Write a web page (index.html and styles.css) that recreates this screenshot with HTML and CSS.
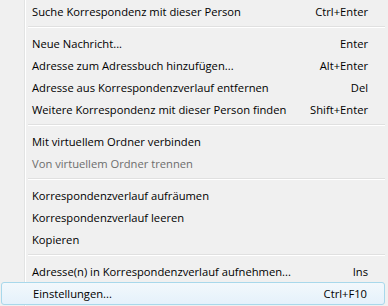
FILE: index.html
```html
<!DOCTYPE html>
<html>
<head>
<meta charset="utf-8">
<link rel="stylesheet" href="styles.css">
</head>
<body>
<div class="menu">
  <div class="item"><span class="label">Suche Korrespondenz mit dieser Person</span><span class="key">Ctrl+Enter</span></div>
  <div class="sep"></div>
  <div class="item"><span class="label">Neue Nachricht...</span><span class="key">Enter</span></div>
  <div class="item"><span class="label">Adresse zum Adressbuch hinzufügen...</span><span class="key">Alt+Enter</span></div>
  <div class="item"><span class="label">Adresse aus Korrespondenzverlauf entfernen</span><span class="key">Del</span></div>
  <div class="item"><span class="label">Weitere Korrespondenz mit dieser Person finden</span><span class="key">Shift+Enter</span></div>
  <div class="sep"></div>
  <div class="item"><span class="label">Mit virtuellem Ordner verbinden</span><span class="key"></span></div>
  <div class="item disabled"><span class="label">Von virtuellem Ordner trennen</span><span class="key"></span></div>
  <div class="sep"></div>
  <div class="item"><span class="label">Korrespondenzverlauf aufräumen</span><span class="key"></span></div>
  <div class="item"><span class="label">Korrespondenzverlauf leeren</span><span class="key"></span></div>
  <div class="item"><span class="label">Kopieren</span><span class="key"></span></div>
  <div class="sep"></div>
  <div class="item"><span class="label">Adresse(n) in Korrespondenzverlauf aufnehmen...</span><span class="key">Ins</span></div>
  <div class="item selected"><span class="label">Einstellungen...</span><span class="key">Ctrl+F10</span></div>
</div>
</body>
</html>
```

FILE: styles.css
```css
html, body {
  margin: 0;
  padding: 0;
  background: #f0f0f0;
}

.menu {
  width: 388px;
  height: 306px;
  background: linear-gradient(to right, #f0f0f0 0, #f0f0f0 24px, #e2e3e3 24px, #e2e3e3 25px, #ffffff 25px, #ffffff 26px, #f0f0f0 26px);
  font-family: "Open Sans", sans-serif;
  font-size: 11.2px;
  color: #000;
}

.item {
  height: 22px;
  display: flex;
  align-items: center;
  padding: 0 20px 0 32px;
  box-sizing: border-box;
}

.label {
  flex: 1;
  white-space: nowrap;
}

.key {
  white-space: nowrap;
}

.disabled {
  color: #6d6d6d;
}

.selected {
  margin: 0 3px 0 1px;
  padding: 0 17px 0 31px;
  height: 23px;
  border: 1px solid #a8d8eb;
  border-radius: 3px;
  background: linear-gradient(to bottom, #f2f8fc, #e5f1fb);
}

.sep {
  height: 10px;
  margin: 0 3px 0 28px;
  box-sizing: border-box;
  padding-top: 4px;
}

.sep::before {
  content: "";
  display: block;
  height: 1px;
  background: #e0e0e0;
  border-bottom: 1px solid #ffffff;
}
```
